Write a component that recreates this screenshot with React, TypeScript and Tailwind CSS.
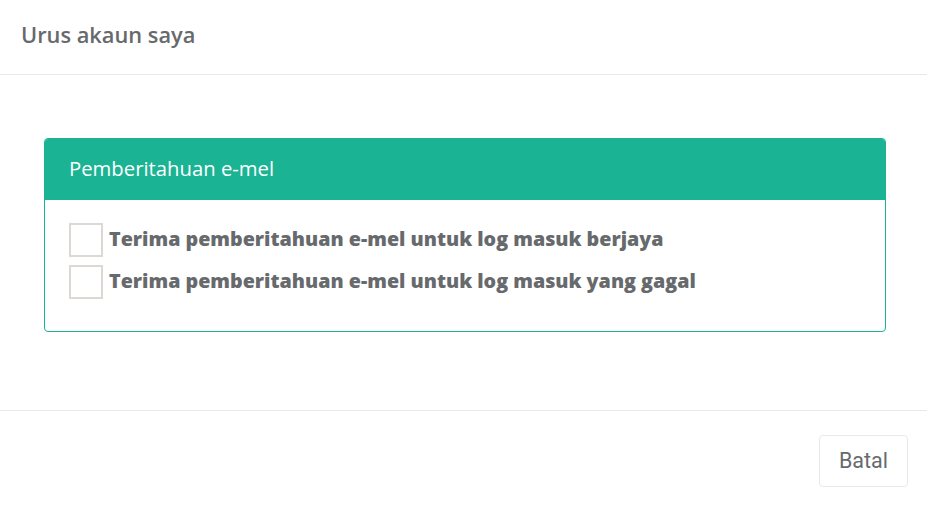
export default function App() {
  const items = [
    "Terima pemberitahuan e-mel untuk log masuk berjaya",
    "Terima pemberitahuan e-mel untuk log masuk yang gagal",
  ];
  return (
    <div className="w-[927px] h-[507px] bg-white flex flex-col text-[#676a6c]" style={{ fontFamily: '"Open Sans", sans-serif' }}>
      <div className="h-[75px] border-b border-[#e7eaec] flex items-center px-[21px] pb-[4px]">
        <h1 className="text-[21.8px] font-semibold leading-none">Urus akaun saya</h1>
      </div>
      <div className="h-[336px] border-b border-[#e7eaec] pt-[63px] pl-[44px] pr-[41px]">
        <div className="border border-[#1ab394] rounded-[4px] overflow-hidden">
          <div className="h-[61px] bg-[#1ab394] text-white text-[20.3px] flex items-center px-[24px] pb-[3px]">
            Pemberitahuan e-mel
          </div>
          <div className="pt-[23px] pb-[32px] px-[24px] flex flex-col gap-[8px]">
            {items.map((t) => (
              <label key={t} className="flex items-center gap-[6px]">
                <span className="w-[34px] h-[34px] border-2 border-[#dcd9d5] bg-white block shrink-0" />
                <span className="text-[19.7px] font-extrabold leading-none pb-[2px]">{t}</span>
              </label>
            ))}
          </div>
        </div>
      </div>
      <div className="flex-1 flex justify-end items-start pt-[24px] pr-[19px]">
        <button className="w-[89px] h-[52px] border border-[#e7eaec] rounded-[4px] bg-white text-[21.5px] text-[#676a6c]" style={{ fontFamily: 'Roboto, sans-serif' }}>
          Batal
        </button>
      </div>
    </div>
  );
}
